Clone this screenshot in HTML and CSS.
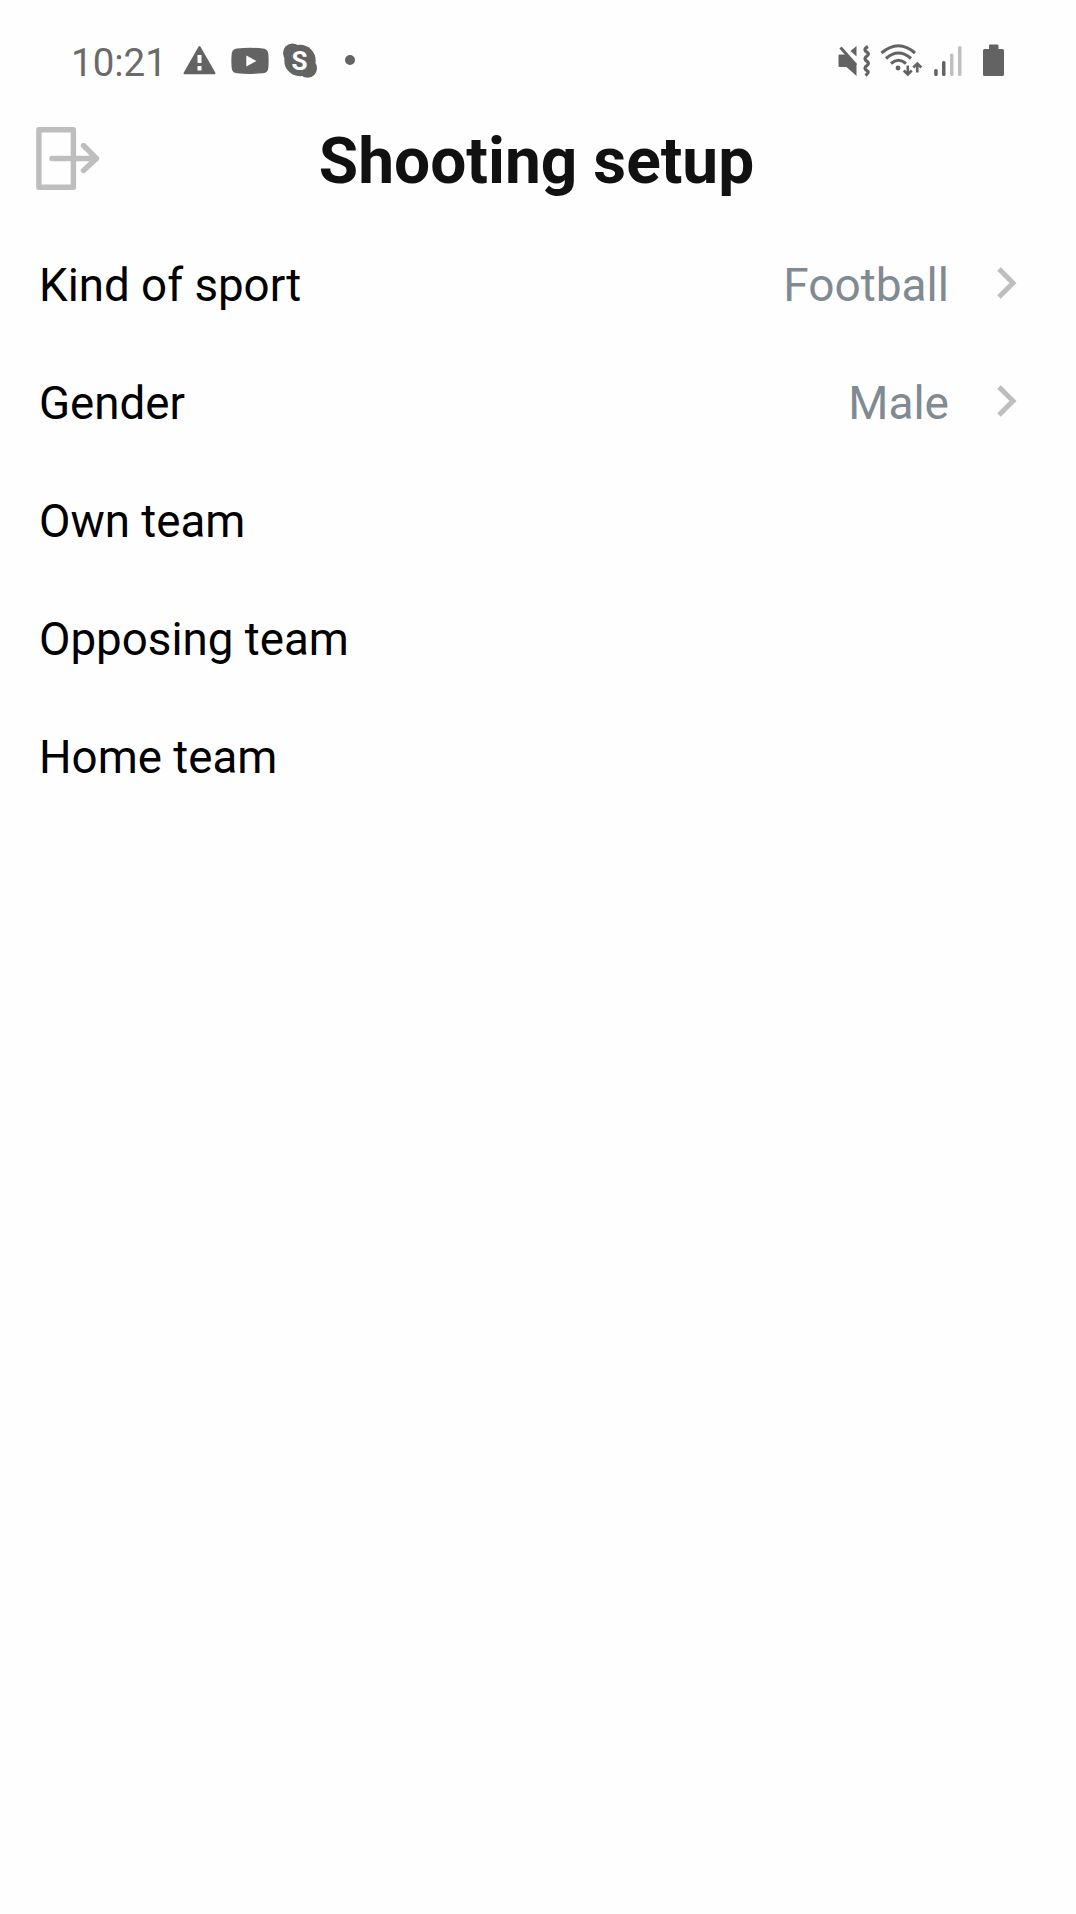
FILE: index.html
```html
<!DOCTYPE html>
<html lang="en">
<head>
    <meta charset="UTF-8">
    <meta name="viewport" content="width=device-width, initial-scale=1.0">
    <title>Shooting setup</title>
    <link rel="stylesheet" href="styles.css">
</head>
<body>
    <div class="status-bar">
        <div class="status-left">
            <span class="clock">10:21</span>
            <svg class="icon-warning" width="34" height="36" viewBox="0 0 34 36">
                <path d="M16.500 5L31.500 31.300H1.500z" fill="#636363" stroke="#636363" stroke-width="2" stroke-linejoin="round"/>
                <path d="M14.500 13h4v8h-4zM14.500 24h4v4.500h-4z" fill="#fff"/>
            </svg>
            <svg class="icon-video" width="38" height="36" viewBox="0 0 38 36">
                <path d="M6 6.500Q19 5 32 6.500Q37 7 37.300 12Q38 19 37.300 26Q37 31 32 31.300Q19 32.500 6 31.300Q1 31 .7 26Q0 19 .7 12Q1 7 6 6.500z" fill="#636363"/>
                <path d="M15.300 13.500L25.500 19l-10.200 5.500z" fill="#fff"/>
            </svg>
            <svg class="icon-skype" width="36" height="36" viewBox="0 0 36 36">
                <circle cx="18" cy="18.500" r="15.700" fill="#636363"/>
                <circle cx="10.500" cy="11" r="9.500" fill="#636363"/>
                <circle cx="25.500" cy="26.300" r="9.500" fill="#636363"/>
                <text class="skype-letter" x="17.600" y="27.500" text-anchor="middle">S</text>
            </svg>
            <span class="dot"></span>
        </div>
        <div class="status-right">
            <svg class="icon-mute" width="34" height="36" viewBox="0 0 34 36">
                <path d="M2.500 12.500h6l11 9.500v12L9.500 25H2.500q-1 0-1-1V13.500q0-1 1-1zM19.500 4v10.500L13.500 9z" fill="#636363"/>
                <path d="M3.500 5.500L19 23" fill="none" stroke="#636363" stroke-width="3"/>
                <path d="M31 4.500q-4.500 2.500-2.500 4.500l2 1.500q2 1.500-.5 3.500q-3 2-1.500 4l2 1.800q2 1.700-.5 3.700q-3 2-1.500 4l2.500 2q1 1-2.500 4" fill="none" stroke="#636363" stroke-width="3.200" stroke-linejoin="round"/>
            </svg>
            <svg class="icon-wifi" width="44" height="36" viewBox="0 0 44 36">
                <g fill="none" stroke="#636363" stroke-width="3.100">
                    <path d="M1.500 11Q18.500-3.500 35 11"/>
                    <path d="M6 16.500Q18.500 5.500 31 16.500"/>
                    <path d="M11 21.500Q18.500 15 26 21.500"/>
                    <path d="M27.800 23.500v9M23.800 28.500l4 4l4-4M37.300 30.500v-9M33.300 25.500l4-4l4 4" stroke-width="2.600"/>
                </g>
                <circle cx="18" cy="26" r="2.400" fill="#636363"/>
            </svg>
            <svg class="icon-signal" width="30" height="36" viewBox="0 0 30 36">
                <rect x="1.200" y="27" width="3.500" height="7" rx="1.500" fill="#636363"/>
                <rect x="9" y="19" width="3.500" height="15" rx="1.500" fill="#636363"/>
                <rect x="17" y="11.500" width="3.500" height="22.500" rx="1.500" fill="#c0c0c0"/>
                <rect x="25" y="4" width="3.500" height="30" rx="1.500" fill="#c0c0c0"/>
            </svg>
            <svg class="icon-battery" width="22" height="36" viewBox="0 0 22 36">
                <path d="M7 2.500h7.500q1 0 1 1V7H19.500q1.500 0 1.500 1.500v24q0 1.500-1.500 1.500H1.500Q0 34 0 32.500v-24Q0 7 1.500 7H6V3.500q0-1 1-1z" fill="#636363"/>
            </svg>
        </div>
    </div>

    <div class="header">
        <svg class="icon-exit" width="64" height="64" viewBox="0 0 64 64">
            <g fill="none" stroke="#bebebe" stroke-width="5.400" stroke-linecap="round" stroke-linejoin="round">
                <rect x="2.900" y="2.700" width="34.500" height="57.600"/>
                <path d="M16 31.500H60.500M47.500 18.500L60.500 31.500L47.500 43.500"/>
            </g>
        </svg>
        <h1>Shooting setup</h1>
    </div>

    <div class="list">
        <div class="row">
            <span class="label">Kind of sport</span>
            <span class="value">Football</span>
            <svg class="chevron" width="20" height="32" viewBox="0 0 20 32">
                <path d="M2 2L16 16L2 30" fill="none" stroke="#bebebe" stroke-width="5"/>
            </svg>
        </div>
        <div class="row">
            <span class="label">Gender</span>
            <span class="value">Male</span>
            <svg class="chevron" width="20" height="32" viewBox="0 0 20 32">
                <path d="M2 2L16 16L2 30" fill="none" stroke="#bebebe" stroke-width="5"/>
            </svg>
        </div>
        <div class="row">
            <span class="label">Own team</span>
        </div>
        <div class="row">
            <span class="label">Opposing team</span>
        </div>
        <div class="row">
            <span class="label">Home team</span>
        </div>
    </div>
</body>
</html>
```
FILE: styles.css
```css
* {
    box-sizing: border-box;
}

body {
    margin: 0;
    min-height: 1914px;
    background-color: #fefefe;
    font-family: Roboto, "Liberation Sans", sans-serif;
    color: #000;
}

.status-bar {
    display: flex;
    justify-content: space-between;
    height: 120px;
    padding: 0 71px 0 71px;
}

.status-left,
.status-right {
    display: flex;
    align-items: center;
    height: 120px;
}

.clock {
    width: 112px;
    padding-top: 5px;
    font-size: 38.5px;
    line-height: 46px;
    color: #6a6a6a;
}

.icon-video {
    margin-left: 14px;
}

.icon-skype {
    margin-left: 13px;
}

.skype-letter {
    font-size: 26px;
    font-weight: bold;
    fill: #fff;
}

.dot {
    width: 10px;
    height: 10px;
    margin-left: 27px;
    border-radius: 50%;
    background-color: #636363;
}

.icon-wifi {
    margin-left: 9px;
}

.icon-signal {
    margin-left: 9px;
}

.icon-battery {
    margin-left: 20px;
}

.header {
    display: grid;
    grid-template-columns: 64px 1fr 64px;
    align-items: center;
    height: 80px;
    margin-bottom: 26px;
    padding: 0 39px 0 36px;
}

.icon-exit {
    margin-bottom: 4px;
}

h1 {
    margin: 0;
    padding-top: 2px;
    font-size: 64px;
    line-height: 80px;
    text-align: center;
    color: #111;
}

.row {
    display: flex;
    align-items: center;
    height: 118px;
    padding: 0 59px 0 39px;
    font-size: 46px;
}

.label {
    flex: 1;
    font-size: 45.700px;
}

.value {
    color: #808a92;
}

.chevron {
    margin-left: 48px;
    margin-bottom: 4px;
}
```
